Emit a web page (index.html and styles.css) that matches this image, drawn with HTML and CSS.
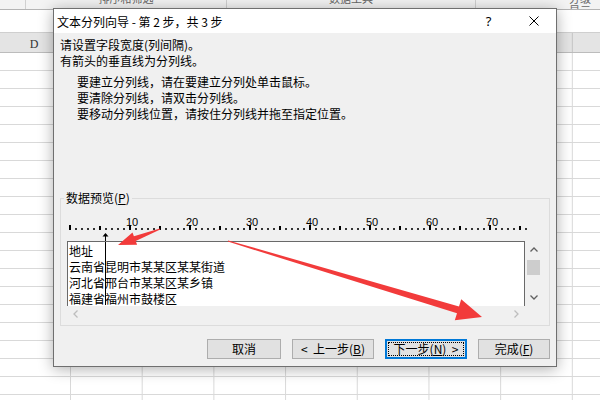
FILE: index.html
```html
<!DOCTYPE html>
<html lang="zh-CN">
<head>
    <meta charset="UTF-8">
    <title>文本分列向导</title>
    <link rel="stylesheet" href="styles.css">
</head>
<body>
    <div class="sheet">
        <div class="ribbon">
            <span class="grp grp-a"></span>
            <span class="grp grp-sort">排序和筛选</span>
            <span class="grp grp-data">数据工具</span>
            <span class="grp grp-outline">分级显示</span>
        </div>
        <div class="formula"></div>
        <div class="colhead"><span class="colname">D</span></div>
        <div class="cells"></div>
    </div>

    <div class="dialog">
        <div class="titlebar">
            <span class="title">文本分列向导 - 第 2 步，共 3 步</span>
            <span class="help">?</span>
            <span class="close">
                <svg width="10" height="10" viewBox="0 0 10 10"><path d="M0.5 0.5 L9.5 9.5 M9.5 0.5 L0.5 9.5" stroke="#000" stroke-width="1" fill="none"/></svg>
            </span>
        </div>
        <div class="body">
            <p class="intro">请设置字段宽度(列间隔)。<br>有箭头的垂直线为分列线。</p>
            <p class="hints">要建立分列线，请在要建立分列处单击鼠标。<br>要清除分列线，请双击分列线。<br>要移动分列线位置，请按住分列线并拖至指定位置。</p>

            <fieldset class="group">
                <legend>数据预览(<u>P</u>)</legend>
                <div class="group-inner">
                    <svg class="ruler" width="475" height="35" viewBox="0 0 475 35">
                        <defs>
                            <pattern id="dot" x="2" y="22" width="6" height="2" patternUnits="userSpaceOnUse">
                                <rect width="2" height="2" fill="#333"/>
                            </pattern>
                        </defs>
                        <rect x="2" y="22" width="458" height="2" fill="url(#dot)"/>
                        <g fill="#000">
                            <rect x="2" y="19" width="2" height="5"/>
                            <rect x="62" y="19" width="2" height="5"/>
                            <rect x="122" y="19" width="2" height="5"/>
                            <rect x="182" y="19" width="2" height="5"/>
                            <rect x="242" y="19" width="2" height="5"/>
                            <rect x="302" y="19" width="2" height="5"/>
                            <rect x="362" y="19" width="2" height="5"/>
                            <rect x="422" y="19" width="2" height="5"/>
                            <rect x="32" y="20" width="2" height="4"/>
                            <rect x="92" y="20" width="2" height="4"/>
                            <rect x="152" y="20" width="2" height="4"/>
                            <rect x="212" y="20" width="2" height="4"/>
                            <rect x="272" y="20" width="2" height="4"/>
                            <rect x="332" y="20" width="2" height="4"/>
                            <rect x="392" y="20" width="2" height="4"/>
                            <rect x="452" y="20" width="2" height="4"/>
                        </g>
                        <g class="ruler-num" text-anchor="middle">
                            <text x="65" y="20">10</text>
                            <text x="125" y="20">20</text>
                            <text x="185" y="20">30</text>
                            <text x="245" y="20">40</text>
                            <text x="305" y="20">50</text>
                            <text x="365" y="20">60</text>
                            <text x="425" y="20">70</text>
                        </g>
                        <path d="M35.5 30.5 L38.5 27 L41.5 30.5 Z" fill="#000"/>
                        <rect x="38" y="30" width="1" height="5" fill="#000"/>
                    </svg>

                    <div class="preview">
                        <div class="data">
                            <div class="break"></div>
                            地址<br>
                            云南省昆明市某某区某某街道<br>
                            河北省邢台市某某区某乡镇<br>
                            福建省福州市鼓楼区
                        </div>
                        <div class="vscroll">
                            <div class="sb-btn">
                                <svg width="8" height="5" viewBox="0 0 8 5"><polyline points="0.5,4.5 4,1 7.5,4.5" fill="none" stroke="#606060" stroke-width="1.3"/></svg>
                            </div>
                            <div class="thumb"></div>
                            <div class="spacer"></div>
                            <div class="sb-btn">
                                <svg width="8" height="5" viewBox="0 0 8 5"><polyline points="0.5,0.5 4,4 7.5,0.5" fill="none" stroke="#606060" stroke-width="1.3"/></svg>
                            </div>
                        </div>
                        <div class="hscroll">
                            <div class="sb-btn">
                                <svg width="5" height="8" viewBox="0 0 5 8"><polyline points="4.5,0.5 1,4 4.5,7.5" fill="none" stroke="#bdbdbd" stroke-width="1.3"/></svg>
                            </div>
                            <div class="sb-btn">
                                <svg width="5" height="8" viewBox="0 0 5 8"><polyline points="0.5,0.5 4,4 0.5,7.5" fill="none" stroke="#bdbdbd" stroke-width="1.3"/></svg>
                            </div>
                        </div>
                        <div class="corner"></div>
                    </div>
                </div>
            </fieldset>

            <div class="buttons">
                <button class="btn btn-cancel">取消</button>
                <button class="btn btn-back">&lt;&nbsp; 上一步(<u>B</u>)</button>
                <button class="btn btn-next">下一步(<u>N</u>)&nbsp; &gt;</button>
                <button class="btn btn-finish">完成(<u>F</u>)</button>
            </div>
        </div>
    </div>

    <!-- annotation arrows drawn over the screenshot -->
    <svg class="marks" width="600" height="400" viewBox="0 0 600 400">
        <polygon fill="#f23b3b" points="159.8,228.5 133.9,236.3 132.5,232.5 118,245 137.1,244.7 135.7,240.9 160.2,229.5"/>
        <polygon fill="#f23b3b" points="228.2,240.4 459,306.4 461.2,299.3 482,317 454.8,320.3 457,313.2 227.8,241.6"/>
    </svg>
</body>
</html>
```

FILE: styles.css
```css
body { margin: 0; width: 600px; height: 400px; overflow: hidden; position: relative; background: #fff; font-family: "Noto Sans CJK SC", "Noto Sans", sans-serif; font-size: 12px; color: #000; }

/* spreadsheet behind the dialog */
.sheet { height: 400px; display: flex; flex-direction: column; }
.ribbon { height: 9px; display: flex; overflow: hidden; background: #f3f3f3; border-bottom: 1px solid #b4b4b4; }
.grp { margin-top: -8px; border-left: 1px solid #d0d0d0; font-size: 11px; line-height: 12px; color: #666; text-align: center; }
.grp-a { width: 25px; border-left: 0; }
.grp-sort { width: 200px; }
.grp-data { width: 248px; }
.grp-outline { flex: 1; text-align: left; padding-left: 93px; }
.formula { height: 22px; border-bottom: 1px solid #cfcfcf; }
.colhead { height: 19px; line-height: 19px; border-bottom: 1px solid #bcbcbc; background-color: #e4e4e4;
    background-image: linear-gradient(to right, transparent 70.7px, #c4c4c4 70.7px, #c4c4c4 71.7px);
    background-size: 71.7px 100%; background-position: -0.7px 0; }
.colname { display: inline-block; width: 68px; text-align: center; font-family: "Liberation Serif", serif; font-size: 12px; color: #333; }
.cells { flex: 1;
    background-image: linear-gradient(to right, transparent 70.7px, #d9d9d9 70.7px, #d9d9d9 71.7px),
                      linear-gradient(to bottom, transparent 17px, #d9d9d9 17px);
    background-size: 71.7px 100%, 100% 18px; background-position: -0.7px 0, 0 0; }

/* dialog window */
.dialog { position: absolute; left: 53px; top: 8px; width: 504px; height: 359px; box-sizing: border-box; border: 1px solid #6f6f6f; background: #f0f0f0; box-shadow: 0 2px 14px rgba(0,0,0,0.32); display: flex; flex-direction: column; }
.titlebar { height: 24px; flex: none; background: #fff; display: flex; align-items: center; padding-left: 3px; }
.title { flex: 1; }
.help { width: 45px; text-align: center; font-family: "Noto Sans", sans-serif; font-size: 13px; line-height: 24px; }
.close { width: 45px; display: flex; justify-content: center; align-items: center; }
.close svg { display: block; }

.body { flex: 1; padding: 4px 6px 6px; display: flex; flex-direction: column; }
.intro { margin: 0; line-height: 16px; }
.hints { margin: 5px 0 0 17px; line-height: 16px; }

.group { margin: 68px 0 0; padding: 0; border: 1px solid #dcdcdc; min-width: 0; }
.group legend { margin-left: 3px; padding: 0 2px; line-height: 16px; }
.group-inner { padding: 0 7px 3px 6px; }
.ruler { display: block; }
.ruler-num { font-family: "Liberation Sans", sans-serif; font-size: 11px; fill: #000; }

.preview { display: grid; grid-template-columns: 458px 17px; grid-template-rows: 65px 16px; }
.data { position: relative; background: #fff; border: 1px solid #696969; border-bottom: 0; padding: 1px 0 0 1px; line-height: 16px; white-space: nowrap; overflow: hidden; }
.break { position: absolute; left: 37px; top: 0; bottom: 1px; width: 1px; background: #000; }
.vscroll { display: flex; flex-direction: column; background: #f0f0f0; }
.sb-btn { height: 17px; width: 17px; display: flex; align-items: center; justify-content: center; }
.sb-btn svg { display: block; }
.thumb { height: 15px; margin: 2px 2px 0; background: #cdcdcd; }
.spacer { flex: 1; }
.hscroll { display: flex; justify-content: space-between; background: #f0f0f0; }
.hscroll .sb-btn { height: 16px; }
.corner { background: #f0f0f0; }

.buttons { margin-top: 13px; display: flex; justify-content: flex-end; gap: 11px; }
.btn { height: 20px; box-sizing: border-box; margin: 0; padding: 0; border: 1px solid #adadad; background: #e1e1e1; font: inherit; line-height: 18px; color: #000; text-align: center; }
.btn-cancel { width: 74px; }
.btn-back { width: 82px; }
.btn-next { width: 82px; border: 2px solid #0078d7; line-height: 16px; position: relative; }
.btn-next::after { content: ""; position: absolute; left: 1px; top: 1px; right: 1px; bottom: 1px; border: 1px dotted #000; }
.btn-finish { width: 72px; }

.marks { position: absolute; left: 0; top: 0; pointer-events: none; }
```
